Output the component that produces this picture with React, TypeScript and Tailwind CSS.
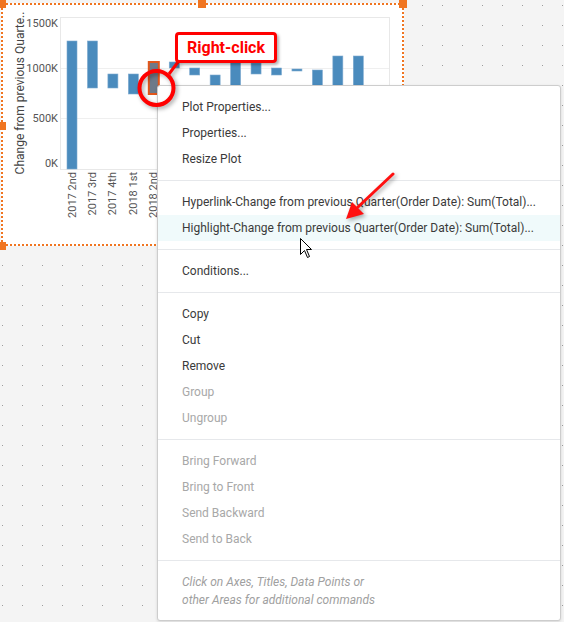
import React from "react";

const BAR_COLOR = "#4a8bbd";

const BARS = [
  { label: "2017 2nd", top: 41, bottom: 169 },
  { label: "2017 3rd", top: 41, bottom: 88 },
  { label: "2017 4th", top: 74, bottom: 88 },
  { label: "2018 1st", top: 74, bottom: 94 },
  { label: "2018 2nd", top: 62, bottom: 94, selected: true },
  { label: "2018 3rd", top: 62, bottom: 68 },
  { label: "2018 4th", top: 68, bottom: 75 },
  { label: "2019 1st", top: 75, bottom: 110 },
  { label: "2019 2nd", top: 62, bottom: 110 },
  { label: "2019 3rd", top: 63, bottom: 74 },
  { label: "2019 4th", top: 68, bottom: 75 },
  { label: "2020 1st", top: 69, bottom: 71 },
  { label: "2020 2nd", top: 70, bottom: 110 },
  { label: "2020 3rd", top: 56, bottom: 110 },
  { label: "2020 4th", top: 56, bottom: 110 },
];

const Y_TICKS = [
  { label: "1500K", y: 23 },
  { label: "1000K", y: 68 },
  { label: "500K", y: 118 },
  { label: "0K", y: 163 },
];

type MenuItem = { label: string; disabled?: boolean; active?: boolean };

const MENU_SECTIONS: MenuItem[][] = [
  [{ label: "Plot Properties..." }, { label: "Properties..." }, { label: "Resize Plot" }],
  [
    { label: "Hyperlink-Change from previous Quarter(Order Date): Sum(Total)..." },
    { label: "Highlight-Change from previous Quarter(Order Date): Sum(Total)...", active: true },
  ],
  [{ label: "Conditions..." }],
  [
    { label: "Copy" },
    { label: "Cut" },
    { label: "Remove" },
    { label: "Group", disabled: true },
    { label: "Ungroup", disabled: true },
  ],
  [
    { label: "Bring Forward", disabled: true },
    { label: "Bring to Front", disabled: true },
    { label: "Send Backward", disabled: true },
    { label: "Send to Back", disabled: true },
  ],
];

function DotGrid() {
  return (
    <svg className="absolute inset-0" width="564" height="622">
      <defs>
        <pattern id="canvas-dots" width="20" height="20" patternUnits="userSpaceOnUse">
          <rect x="2" y="5" width="1" height="1" fill="#9c9c9c" />
        </pattern>
      </defs>
      <rect width="564" height="622" fill="url(#canvas-dots)" />
    </svg>
  );
}

function Handle({ className }: { className: string }) {
  return <div className={`absolute h-2 w-2 bg-[#f07521] ${className}`} />;
}

function ChartWidget() {
  return (
    <>
      <div className="absolute left-[1px] top-[3px] h-[243px] w-[403px] border-2 border-dotted border-[#f07521] bg-white">
        <svg width="399" height="239" viewBox="3 5 399 239" fontFamily="Roboto, sans-serif">
          <line x1="60" y1="68.5" x2="389" y2="68.5" stroke="#efefef" />
          <line x1="60" y1="118.5" x2="389" y2="118.5" stroke="#efefef" />
          <rect x="60.5" y="17.5" width="329" height="152" fill="none" stroke="#e8e8e8" />
          {Y_TICKS.map((t) => (
            <text key={t.label} x="58" y={t.y} textAnchor="end" dominantBaseline="central" fontSize="11" fill="#555">
              {t.label}
            </text>
          ))}
          <text
            x="20"
            y="93"
            transform="rotate(-90 20 93)"
            textAnchor="middle"
            dominantBaseline="central"
            fontSize="12"
            fill="#444"
          >
            Change from previous Quarte..
          </text>
          {BARS.map((b, i) => {
            const x = 67 + i * 20.45;
            const cx = x + 5;
            return (
              <g key={b.label}>
                {b.selected ? (
                  <rect x={x} y={b.top} width="10" height={b.bottom - b.top} fill="#6e7a89" stroke="#e2571c" strokeWidth="2" />
                ) : (
                  <rect x={x} y={b.top} width="10" height={b.bottom - b.top} fill={BAR_COLOR} stroke="#7eaad0" strokeWidth="0.6" />
                )}
                <text
                  x={cx}
                  y="172"
                  transform={`rotate(-90 ${cx} 172)`}
                  textAnchor="end"
                  dominantBaseline="central"
                  fontSize="11"
                  fill="#555"
                >
                  {b.label}
                </text>
              </g>
            );
          })}
        </svg>
      </div>
      <Handle className="left-[-2px] top-0" />
      <Handle className="left-[198px] top-0" />
      <Handle className="left-[399px] top-0" />
      <Handle className="left-[-2px] top-[122px]" />
      <Handle className="left-[-2px] top-[242px]" />
    </>
  );
}

function ContextMenu() {
  return (
    <div className="absolute left-[157px] top-[85px] w-[404px] rounded-[3px] border border-[#cdcdcd] bg-white text-[12px] text-[#3a3a3a] shadow-[0_1px_3px_rgba(0,0,0,0.12)]">
      {MENU_SECTIONS.map((section, si) => (
        <div key={si} className="border-b border-[#e6e8eb] py-2">
          {section.map((item) => (
            <div
              key={item.label}
              className={`flex h-[26px] items-center whitespace-nowrap pl-6 ${item.active ? "bg-[#f0fafb]" : ""} ${
                item.disabled ? "text-[#a8a8a8]" : ""
              }`}
            >
              {item.label}
            </div>
          ))}
        </div>
      ))}
      <div className="pb-[11px] pl-6 pt-3 text-[12px] italic leading-[18px] text-[#a0a0a0]">
        <div>Click on Axes, Titles, Data Points or</div>
        <div>other Areas for additional commands</div>
      </div>
    </div>
  );
}

function Annotations() {
  return (
    <svg className="pointer-events-none absolute inset-0" width="564" height="622">
      <g className="drop-shadow-[2px_2px_2px_rgba(0,0,0,0.35)]">
        <line x1="169" y1="74" x2="178" y2="62" stroke="#ff0000" strokeWidth="3" />
        <circle cx="156.5" cy="88" r="17" fill="none" stroke="#ff0000" strokeWidth="4" />
        <line x1="393" y1="174" x2="358" y2="207" stroke="#ff1010" strokeWidth="3" strokeLinecap="round" />
        <polygon points="346,219 352,202 364,214" fill="#ff1010" />
      </g>
      <path
        d="M300.5 238.5 L300.5 254.5 L304.5 250.5 L307.5 257.5 L309.5 256.5 L306.5 249.5 L311.5 249.5 Z"
        fill="#ffffff"
        stroke="#000000"
        strokeWidth="1"
        strokeLinejoin="miter"
      />
    </svg>
  );
}

export default function App() {
  return (
    <div className="relative h-[622px] w-[564px] overflow-hidden bg-[#f4f4f4] font-['Roboto',sans-serif]">
      <DotGrid />
      <ChartWidget />
      <ContextMenu />
      <Annotations />
      <div className="absolute left-[175px] top-[32px] flex h-[31px] w-[102px] items-center justify-center rounded-[4px] border-[3px] border-[#ff0000] bg-white text-[16px] font-bold text-[#ff0000] shadow-[2px_2px_3px_rgba(0,0,0,0.3)]">
        Right-click
      </div>
    </div>
  );
}
